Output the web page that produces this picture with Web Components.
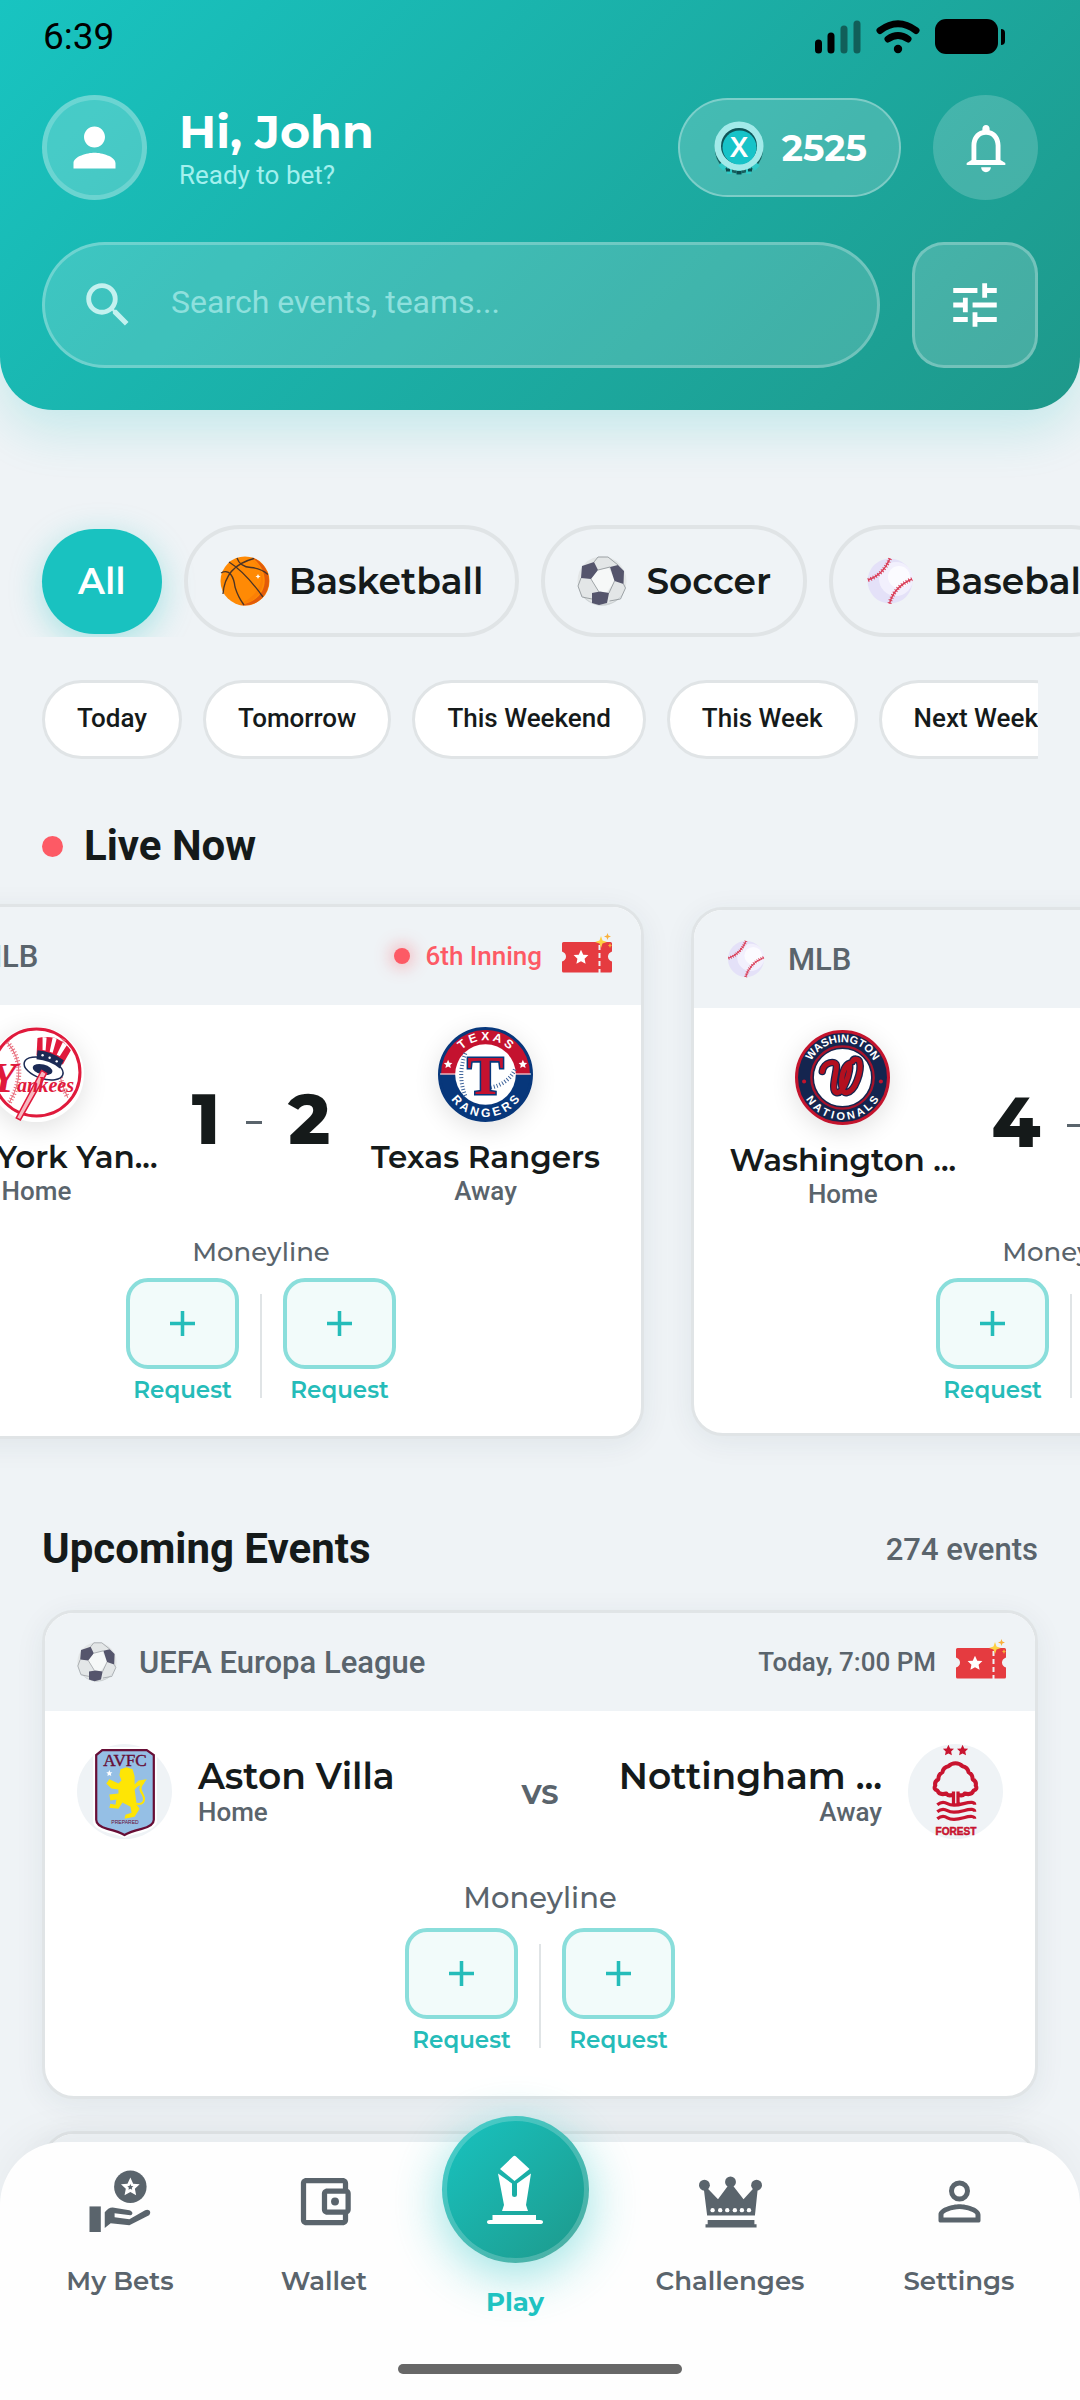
<!DOCTYPE html>
<html lang="en">
<head>
<meta charset="utf-8">
<meta name="viewport" content="width=device-width, initial-scale=1">
<title>Events</title>
<style>
  :root {
    --bg: #eff3f6;
    --ink: #151a1a;
    --muted: #5a646c;
    --line: #e0e4e6;
    --teal: #19c2c0;
    --live: #fd5a65;
    --display: Montserrat, Inter, "Noto Sans", sans-serif;
  }
  * { box-sizing: border-box; }
  body {
    margin: 0;
    background: var(--bg);
    color: var(--ink);
    font-family: Roboto, "Noto Sans", sans-serif;
  }
</style>
</head>
<body>
<bet-app></bet-app>

<script>
const STAR = 'M0-10 2.9-3.6 9.5-3.1 4.6 1.5 5.9 8.1 0 4.9-5.9 8.1-4.6 1.5-9.5-3.1-2.9-3.6z';

const ICONS = {
  person: '<svg viewBox="0 0 24 24"><path fill="currentColor" d="M12 12c2.21 0 4-1.79 4-4s-1.79-4-4-4-4 1.79-4 4 1.79 4 4 4zm0 2c-2.67 0-8 1.34-8 4v2h16v-2c0-2.66-5.33-4-8-4z"/></svg>',
  search: '<svg viewBox="0 0 24 24"><path fill="currentColor" d="M15.5 14h-.79l-.28-.27A6.471 6.471 0 0 0 16 9.500 6.500 6.500 0 1 0 9.500 16c1.610 0 3.090-.590 4.230-1.570l.270.280v.790l5 4.990L20.490 19l-4.990-5zm-6 0C7.010 14 5 11.990 5 9.500S7.010 5 9.500 5 14 7.010 14 9.500 11.990 14 9.500 14z"/></svg>',
  bell: '<svg viewBox="0 0 24 24"><path fill="currentColor" d="M12 22c1.1 0 2-.9 2-2h-4c0 1.1.9 2 2 2zm6-5v-6c0-3.070-1.630-5.640-4.500-6.320V4c0-.830-.670-1.500-1.500-1.500s-1.500.670-1.500 1.500v.680C7.640 5.360 6 7.920 6 11v6l-2 1.200V19h16v-.8L18 17zm-2 0H8v-6c0-2.480 1.510-4.500 4-4.500s4 2.020 4 4.500v6z"/></svg>',
  tune: '<svg viewBox="0 0 24 24"><path fill="currentColor" d="M3 17v2h6v-2H3zM3 5v2h10V5H3zm10 16v-2h8v-2h-8v-2h-2v6h2zM7 9v2H3v2h4v2h2V9H7zm14 4v-2H11v2h10zm-6-4h2V7h4V5h-4V3h-2v6z"/></svg>',
  plus: '<svg viewBox="0 0 24 24"><path stroke="currentColor" stroke-width="3.4" d="M12 0v24M0 12h24"/></svg>',
  wallet: '<svg viewBox="0 0 24 24"><path fill="currentColor" d="M21 7.280V5c0-1.100-.900-2-2-2H5c-1.110 0-2 .900-2 2v14c0 1.100.890 2 2 2h14c1.100 0 2-.900 2-2v-2.280c.590-.350 1-.980 1-1.720V9c0-.740-.410-1.370-1-1.720zM20 9v6h-7V9h7zM5 19V5h14v2h-6c-1.100 0-2 .900-2 2v6c0 1.100.900 2 2 2h6v2H5z"/><circle fill="currentColor" cx="16" cy="12" r="1.500"/></svg>',
  personOutline: '<svg viewBox="0 0 24 24"><path fill="currentColor" fill-rule="evenodd" d="M12 4a4 4 0 1 0 0 8 4 4 0 0 0 0-8zm0 1.900a2.100 2.100 0 1 1 0 4.200 2.100 2.100 0 0 1 0-4.200zM12 13c-2.670 0-8 1.340-8 4v2.200c0 .500.300.800.800.800h14.400c.500 0 .800-.300.800-.800V17c0-2.660-5.330-4-8-4zm0 1.900c2.970 0 6.100 1.460 6.100 2.100v1.100H5.900V17c0-.640 3.130-2.100 6.100-2.100z"/></svg>',
  bets: `<svg viewBox="0 0 64 64"><g fill="currentColor"><path d="M.5 37H12v26H.5z"/><circle cx="42" cy="17" r="16.5"/>
    <path fill-rule="evenodd" d="M16 43c2-3 5-5 8-5l17 3c4 1 4 5 1 5l-16-2v4l15 2 16-9c4-2 7 2 4 5L41 56l-19-2-6 5z"/></g>
    <path fill="#fff" transform="translate(42 17.500)" d="${STAR}"/><path fill="currentColor" transform="translate(42 17.500) scale(.32)" d="${STAR}"/></svg>`,
  crown: `<svg viewBox="0 0 58 58"><g transform="translate(0 6)" fill="currentColor"><circle cx="5" cy="8" r="5"/><circle cx="29" cy="5" r="5"/><circle cx="53" cy="8" r="5"/>
    <path d="M4.500 12 8 11l9.500 10L27 8h4l10 13 9-10 4 1-2.500 24h-44zM8 40h43v4h2v3H6v-3h2z"/>
    <g fill="#fff"><circle cx="12.500" cy="31" r="2"/><circle cx="19.500" cy="31" r="2"/><circle cx="26" cy="31" r="2"/><circle cx="33" cy="31" r="2"/><circle cx="39.500" cy="31" r="2"/><circle cx="46" cy="31" r="2"/></g></g></svg>`,
  bishop: '<svg viewBox="0 0 60 70"><path fill="currentColor" d="M28 1.500q1.500-1.500 3 0l13.500 12.500-15 12L15 14zM13 18.500l14 10V40q0 2 2.500 2t2.500-2V28.500l14-10L41 50l2 6H17l2-6zM7.500 60H51v5h4q3 0 3 2t-3 2H5q-3 0-3-2t3-2h2.500z"/></svg>',
  signal: '<svg viewBox="0 0 46 34"><path d="M3.500 23v7M16 16v14" stroke="#000" stroke-width="7" stroke-linecap="round"/><path d="M29 9v21M42 4v26" stroke="#115f59" stroke-width="7" stroke-linecap="round"/></svg>',
  wifi: '<svg viewBox="0 0 46 34"><g fill="none" stroke="#000" stroke-width="7" stroke-linecap="round"><path d="M5 10.500Q23-3 41 10.500M13 19q10-7 20 0"/></g><circle cx="23" cy="29" r="4.200"/></svg>',
  battery: '<svg viewBox="0 0 71 36"><rect x="0" y="0" width="63" height="35" rx="11"/><path d="M66 10q4 0 4 4v8q0 4-4 4z"/></svg>',
  coin: `<svg viewBox="0 0 50 54"><circle cx="25" cy="28.500" r="24" fill="#17605f"/><path d="M6 43l5 5M15.500 46v7M25 48v6M34.500 46v7M44 43l-5 5" stroke="#30c9c6" stroke-width="5"/>
    <path d="M12 47.500h4v3h-4zM22.500 50h5v3.500h-5zM34 47.500h4v3h-4z" fill="#0d4b4d"/>
    <circle cx="25" cy="25" r="24.500" fill="#a2eae9"/><circle cx="25" cy="25" r="18" fill="#0e5558"/><circle cx="25.500" cy="26.500" r="17" fill="#17c3c8"/>
    <text x="25" y="36" text-anchor="middle" font-family="Inter, sans-serif" font-size="27" font-weight="600" fill="#fff">X</text></svg>`,
  basketball: `<svg viewBox="0 0 50 50"><circle cx="25" cy="25" r="24.500" fill="#ff8a05"/><path fill="#e25b0a" d="M31 1.300A24.500 24.500 0 0 1 20 49C52 44 50 12 31 1.300z"/><path fill="#f87607" d="M27 1A24.500 24.500 0 0 1 18 48.500C46 38 48 12 27 1z" opacity=".5"/>
    <g fill="none" stroke="#4c3426" stroke-width="1.300"><path d="M9 6q16 10 34 35M3 38Q5 10 34 2.500M1 17c9-5 13 5 14 14q3 10 9 18M17 2q3 9 14 9.500 10 1 17 7"/></g><path fill="#fff" d="m38 18 .8 1.700 1.700.8-1.700.8-.8 1.700-.8-1.700-1.700-.8 1.700-.8z"/></svg>`,
  soccer: `<svg viewBox="0 0 50 50"><circle cx="25" cy="25" r="24.500" fill="#e3e6e7"/><path fill="#cdd2d4" d="M3 36a24.500 24.500 0 0 0 44 0 26 26 0 0 1-44 0z"/><path fill="#f6f8f8" d="m20 14 12-2 6 13-8 11H22l-8-13z"/>
    <path fill="#55556c" d="m5 10 12-4 4 8-7 9-10-1zM33 11l8-2 6 6-.500 13-9-3zM15 37l8-1.500 9 1.500-2 10-8 2-7-2z"/>
    <path fill="none" stroke="#8a9094" stroke-width=".8" d="m21 14 12-3M14 23l8 13M37.500 25 32 37M17 6l4-5h10l10 8M4 22l-3 8 4 11 10 2M46.500 28l2 4-5 11-11 2"/></svg>`,
  baseball: `<svg viewBox="0 0 50 50"><circle cx="25" cy="25" r="22.500" fill="#e4e1f8"/><circle cx="31" cy="23" r="17" fill="#f2f0fd"/><circle cx="34" cy="21" r="11" fill="#fbfbff"/>
    <g fill="none" stroke="#da3f59"><path stroke-width="1.400" d="M3 24Q18 19 25 2.500M24.500 47.500Q29 31 47 23"/><path stroke-width="4" stroke-dasharray="1 1.800" d="M3 24Q18 19 25 2.500M24.500 47.500Q29 31 47 23"/></g></svg>`,
  ticket: `<svg viewBox="0 0 50 42"><path fill="#e53b40" d="M1.500 9h47q1.500 0 1.500 1.500v8q-4 1.500-4 5t4 5V38q0 1.500-1.500 1.500h-47Q0 39.500 0 38v-9.500q4-1.500 4-5t-4-5v-8Q0 9 1.500 9z"/><path stroke="#eff3f6" stroke-width="2" stroke-dasharray="5 3" d="M37.500 12v28"/>
    <path fill="#fff" transform="translate(19 24.500) scale(.78)" d="${STAR}"/><path fill="#fdd043" d="m39 3 1.500 4.500L45 9l-4.500 1.500L39 15l-1.500-4.500L33 9l4.500-1.500z"/><path fill="#f9b03c" d="m45.500 0 .9 2.600L49 3.500l-2.600.9-.9 2.600-.9-2.600-2.600-.9 2.600-.9zM48 10l.7 1.800 1.300.7-1.300.7L48 15l-.7-1.800-1.300-.7 1.300-.7z"/></svg>`,
  yankees: `<svg viewBox="0 0 94 94"><circle cx="47" cy="45" r="43" fill="#fff" stroke="#e01a3c" stroke-width="3"/>
    <g fill="none" stroke="#e8707f"><path d="M18 15q22 26 2 60M74 12q-12 26 4 58"/><path stroke-width="5" stroke-dasharray="1 2" d="M18 15q22 26 2 60M74 12q-12 26 4 58"/></g>
    <ellipse cx="54" cy="41" rx="20" ry="10" transform="rotate(18 54 41)" fill="#fff" stroke="#1b2a55" stroke-width="1.500"/><ellipse cx="53" cy="42" rx="10" ry="5" transform="rotate(14 53 42)" fill="#1b2a55"/>
    <path fill="#e01a3c" d="M48 11q8-2 18 0 10 5 15 12l-8 14-26-9z"/><path fill="#fff" d="m53 10 4 .3-1 13-3-.5zM63 10.500l4 1-4 14-3-1zM73 15l4 3-7 11-3-1.500z"/><path fill="#1b2a55" d="M48 23q14 1 26 10l-4 8q-10-8-23-9z"/>
    <g fill="#fff"><circle cx="53" cy="28" r="1.200"/><circle cx="60" cy="30.500" r="1.200"/><circle cx="67" cy="34" r="1.200"/></g>
    <path fill="#f7b9c1" stroke="#e01a3c" stroke-width="1.500" d="m52 43 5 3-26 46-4-2z"/>
    <text x="2" y="64" font-family="'Liberation Serif', serif" font-style="italic" font-weight="700" fill="#e01a3c"><tspan font-size="42">Y</tspan><tspan font-size="20">ankees</tspan></text></svg>`,
  rangers: `<svg viewBox="0 0 94 94"><circle cx="47" cy="47" r="45.500" fill="#c4122f"/><path fill="#07377b" d="M1.500 47a45.500 45.500 0 0 0 91 0z"/><circle cx="47" cy="47" r="45.500" fill="none" stroke="#07377b" stroke-width="3"/><path stroke="#fff" stroke-width="1" d="M2 46.500h90"/>
    <circle cx="47" cy="47" r="30" fill="#fff"/><g fill="none" stroke="#40659c" stroke-width="4" stroke-dasharray="1 2"><path d="M27 26q-8 22 0 42M76 42q-6 14-24 18"/></g>
    <path id="top" fill="none" d="M13 47a34 34 0 0 1 68 0"/><path id="bot" fill="none" d="M5 47a42 42 0 0 0 84 0"/>
    <g font-family="'Liberation Sans', sans-serif" font-weight="700" font-size="12" fill="#fff" text-anchor="middle"><text><textPath href="#top" startOffset="50%">T E X A S</textPath></text><text><textPath href="#bot" startOffset="50%">R A N G E R S</textPath></text></g>
    <g transform="translate(10 37) scale(.45)" fill="#fff"><path d="${STAR}"/></g><g transform="translate(84 37) scale(.45)" fill="#fff"><path d="${STAR}"/></g>
    <text x="47" y="66" text-anchor="middle" font-family="'Liberation Serif', serif" font-weight="700" font-size="54" fill="#c4122f" stroke="#07377b" stroke-width="3" paint-order="stroke">T</text></svg>`,
  nationals: `<svg viewBox="0 0 94 94"><circle cx="47" cy="47" r="45.500" fill="#14254f" stroke="#c3142d" stroke-width="3"/><circle cx="47" cy="47" r="30" fill="#fff" stroke="#a8132b" stroke-width="4"/><circle cx="47" cy="47" r="29" fill="#fff" stroke="#14254f" stroke-width="1.500"/>
    <path id="top" fill="none" d="M12 47a35 35 0 0 1 70 0"/><path id="bot" fill="none" d="M5 47a42 42 0 0 0 84 0"/>
    <g font-family="'Liberation Sans', sans-serif" font-weight="700" font-size="11" fill="#fff" text-anchor="middle"><text><textPath href="#top" startOffset="50%">WASHINGTON</textPath></text><text><textPath href="#bot" startOffset="50%">N A T I O N A L S</textPath></text></g>
    <circle cx="9" cy="51" r="2" fill="#c3142d"/><circle cx="85" cy="51" r="2" fill="#c3142d"/>
    <g fill="none" stroke-linecap="round" stroke-linejoin="round"><path stroke="#14254f" stroke-width="7.500" d="M27 41c1-9 14-12 14-5 0 7-6 24 0 26 7 2 14-20 13-29-9 3-11 30-3 29 9-1 15-22 13-30-1-4-6-4-7-1"/><path stroke="#b3101f" stroke-width="5" d="M27 41c1-9 14-12 14-5 0 7-6 24 0 26 7 2 14-20 13-29-9 3-11 30-3 29 9-1 15-22 13-30-1-4-6-4-7-1"/></g></svg>`,
  villa: `<svg viewBox="0 0 94 94"><circle cx="47" cy="47" r="47" fill="#eff3f6"/><path fill="#fff" d="M23 3h48q6 5 8 9v66q-2 6-16 10-10 2-16 5-6-3-16-5-14-4-15-10V12q2-5 7-9z"/>
    <path fill="#95bfe5" stroke="#670e36" stroke-width="2.200" d="M25 6h44l7 5v64q0 6-12 9-12 3-17 6-5-3-17-6-11-3-11-9V11z"/>
    <text x="47.500" y="21.500" text-anchor="middle" font-family="'Liberation Serif', serif" font-size="17" fill="#670e36" stroke="#670e36" stroke-width=".4">AVFC</text><text x="47.500" y="79.500" text-anchor="middle" font-family="'Liberation Sans', sans-serif" font-size="5" fill="#670e36">PREPARED</text>
    <path fill="#fff" transform="translate(32 29) scale(.32)" d="${STAR}"/>
    <path fill="#fee505" d="m43 25 6-2 6 2 2 7v8l4-4 8-1-3 4-6 3-3 3 1 7 1 8 3 4-5 8-10 2 1-4 6-2-1-6-8-4-4 6-9-1 1-4 5 1 1-5-6 1-1-6 9-1v-4l-7-1-5-5 3-4 9 4 3-3-2-5z"/><path fill="none" stroke="#fee505" stroke-width="2" d="M55 58c11 4 13-2 10-8-4-6-2-9 1-12"/></svg>`,
  forest: `<svg viewBox="0 0 94 94"><circle cx="47" cy="47" r="47" fill="#eff3f6"/><g fill="#c8142f"><path transform="translate(40 6.500) scale(.58)" d="${STAR}"/><path transform="translate(54 6.500) scale(.58)" d="${STAR}"/></g>
    <g fill="none" stroke="#c8142f"><path stroke-width="4" stroke-linejoin="round" d="M45 50q-5 2-7-1-7 2-9-3-4-1-2-5-1-4 3-6 0-5 4-7 1-5 6-6 3-3 7-3t7 3q5 1 6 6 4 2 4 7 4 2 3 6 2 4-2 5-2 5-9 3-2 3-7 1"/><path stroke-width="3.200" d="M45 47v14M49.500 47v14M29 60q5-4 10-1t16 0 11 1M29 67q5-4 10-1t16 0 11 1M29 74q5-4 10-1t16 0 11 1"/></g>
    <text x="47.500" y="90" text-anchor="middle" font-family="'Liberation Sans Narrow', 'Liberation Sans', sans-serif" font-weight="700" font-size="10" fill="#c8142f" stroke="#c8142f" stroke-width=".5">FOREST</text></svg>`
};

// Attach an open shadow root and fill it
function render(el, html) {
  el.attachShadow({ mode: 'open' }).innerHTML = `<style>*{box-sizing:border-box}</style>${html}`;
}

// Icon, sized with --size (and --w for the ones that are not square)
class AppIcon extends HTMLElement {
  connectedCallback() {
    render(this, `
      <style>
        :host { display: block; flex: none; width: var(--w, var(--size, 24px)); height: var(--size, 24px); }
        svg { display: block; width: 100%; height: 100%; }
      </style>
      ${ICONS[this.getAttribute('name')]}
    `);
  }
}
customElements.define('app-icon', AppIcon);

class StatusBar extends HTMLElement {
  connectedCallback() {
    render(this, `
      <style>
        :host { display: flex; justify-content: space-between; align-items: center; height: 73px; padding: 0 74px 0 43px; color: #000; font-size: 37px; }
        div { display: flex; align-items: center; gap: 14px; }
        app-icon { --size: 34px; --w: 46px; }
        .battery { --size: 36px; --w: 71px; }
      </style>
      <time>6:39</time>
      <div><app-icon name="signal"></app-icon><app-icon name="wifi"></app-icon><app-icon class="battery" name="battery"></app-icon></div>
    `);
  }
}
customElements.define('status-bar', StatusBar);

class AppHeader extends HTMLElement {
  connectedCallback() {
    render(this, `
      <style>
        :host {
          display: block; flex: none; padding-bottom: 42px; color: #fff;
          border-radius: 0 0 53px 53px;
          background: linear-gradient(135deg, #18c4c1, #1e988a);
          box-shadow: 0 20px 50px #19c2c033;
        }
        .row { display: flex; align-items: center; padding: 0 42px; }
        .top { margin: 22px 0 42px; }
        button { font: inherit; color: inherit; padding: 0; border: 2px solid #ffffff4d; background: #ffffff2e; display: grid; place-items: center; flex: none; }
        .round { width: 105px; height: 105px; border-radius: 50%; --size: 63px; }
        .avatar { border: 5px solid #ffffff33; background: #ffffff33; }
        .bell { border: 0; margin-left: 32px; --size: 58px; }
        .hello { flex: 1; margin-left: 32px; padding-top: 6px; }
        h1 { margin: 0; font: 700 46px/48px var(--display); }
        p { margin: 0; font-size: 26px; line-height: 38px; color: #a3f0ee; }
        .coins { display: flex; gap: 18px; height: 99px; padding: 0 32px 0 34px; border-radius: 50px; font: 700 36px/40px var(--display); }
        .coins app-icon { --size: 54px; --w: 50px; }
        .search { flex: 1; display: flex; align-items: center; gap: 34px; height: 126px; padding: 0 40px 0 34px; border: 3px solid #ffffff40; border-radius: 63px; background: #ffffff29; }
        .search app-icon { --size: 58px; color: #c3f1ef; }
        input { flex: 1; min-width: 0; border: 0; padding: 0 0 6px; background: none; font: 400 32px/40px Roboto, sans-serif; color: #fff; outline: 0; }
        input::placeholder { color: #8ee0dd; }
        .filter { width: 126px; height: 126px; border: 3px solid #ffffff40; border-radius: 32px; margin-left: 32px; --size: 58px; }
      </style>
      <status-bar></status-bar>
      <div class="row top">
        <button class="round avatar" aria-label="Profile"><app-icon name="person"></app-icon></button>
        <div class="hello"><h1>Hi, John</h1><p>Ready to bet?</p></div>
        <button class="coins"><app-icon name="coin"></app-icon><span>2525</span></button>
        <button class="round bell" aria-label="Notifications"><app-icon name="bell"></app-icon></button>
      </div>
      <div class="row">
        <label class="search"><app-icon name="search"></app-icon><input type="search" aria-label="Search" placeholder="Search events, teams..."></label>
        <button class="filter" aria-label="Filters"><app-icon name="tune"></app-icon></button>
      </div>
    `);
  }
}
customElements.define('app-header', AppHeader);

class SportChip extends HTMLElement {
  connectedCallback() {
    const icon = this.getAttribute('icon');
    render(this, `
      <style>
        :host { display: block; flex: none; }
        button { display: flex; align-items: center; gap: 19px; height: 112px; padding: 0 32px; border: 4px solid var(--line); border-radius: 56px; background: none; color: var(--ink); font: 600 36px/44px var(--display); --size: 50px; white-space: nowrap; }
        :host([active]) button { height: 105px; padding: 0 36px; border: 0; background: var(--teal); color: #fff; box-shadow: 0 8px 32px #19c2c059; }
      </style>
      <button>${icon ? `<app-icon name="${icon}"></app-icon>` : ''}<slot></slot></button>
    `);
  }
}
customElements.define('sport-chip', SportChip);

class DateChip extends HTMLElement {
  connectedCallback() {
    render(this, `
      <style>
        :host { display: block; flex: none; }
        button { height: 79px; padding: 0 32px 4px; border: 3px solid var(--line); border-radius: 40px; background: #fff; color: var(--ink); font: 500 26px/32px Roboto, sans-serif; white-space: nowrap; }
      </style>
      <button><slot></slot></button>
    `);
  }
}
customElements.define('date-chip', DateChip);

// Moneyline block with its two request buttons
class MoneyLine extends HTMLElement {
  connectedCallback() {
    const req = '<div class="pick"><button aria-label="Request"><app-icon name="plus"></app-icon></button><span>Request</span></div>';
    render(this, `
      <style>
        :host { display: block; text-align: center; font: 600 23px/30px var(--display); }
        .title { font-size: var(--title, 26px); font-weight: 500; line-height: var(--title-line, 34px); color: var(--muted); margin-bottom: 9px; }
        .row { display: flex; justify-content: center; gap: 21px; }
        .pick { color: #25bcb9; display: flex; flex-direction: column; align-items: center; gap: 6px; }
        button { width: 113px; height: 91px; padding: 0; border: 4px solid #8adedb; border-radius: 22px; background: #f2fbfa; color: inherit; display: grid; place-items: center; --size: 25px; }
        i { width: 2px; margin: 16px 0 7px; background: var(--line); }
      </style>
      <div class="title">Moneyline</div>
      <div class="row">${req}<i></i>${req}</div>
    `);
  }
}
customElements.define('money-line', MoneyLine);

// Card frame: league on the left, "status" slot on the right, body below
class EventCard extends HTMLElement {
  connectedCallback() {
    render(this, `
      <style>
        :host { display: block; border: 3px solid var(--line); border-radius: 32px; background: #fff; overflow: hidden; box-shadow: 0 6px 30px #1a334d12; }
        header { display: flex; align-items: center; height: 98px; padding: 0 29px 0 32px; background: var(--bg); color: var(--muted); font-size: 31px; font-weight: 500; --size: 40px; }
        .league { flex: 1; margin-left: 22px; white-space: nowrap; }
        .status { display: flex; align-items: center; font-size: 26px; }
        .ticket { --size: 42px; --w: 50px; margin: 0 0 4px 20px; }
      </style>
      <header>
        <app-icon name="${this.getAttribute('sport')}"></app-icon>
        <span class="league">${this.getAttribute('league')}</span>
        <span class="status"><slot name="status"></slot></span>
        <app-icon class="ticket" name="ticket"></app-icon>
      </header>
      <slot></slot>
    `);
  }
}
customElements.define('event-card', EventCard);

class LiveBadge extends HTMLElement {
  connectedCallback() {
    render(this, `
      <style>
        :host { display: flex; align-items: center; gap: 16px; color: var(--live); font-size: 26px; }
        i { width: 16px; height: 16px; border-radius: 50%; background: currentColor; box-shadow: 0 0 16px 4px #fd5a6559; }
      </style>
      <i></i><slot></slot>
    `);
  }
}
customElements.define('live-badge', LiveBadge);

class LiveGame extends HTMLElement {
  connectedCallback() {
    const a = name => this.getAttribute(name);
    const team = (logo, name, role) => `<div class="team"><app-icon name="${logo}"></app-icon><b>${name}</b><span>${role}</span></div>`;
    render(this, `
      <style>
        :host { display: block; padding: 22px 32px var(--pad, 31px); }
        .row { display: grid; grid-template-columns: minmax(0, 1fr) auto minmax(0, 1fr); align-items: center; margin-bottom: var(--pad, 31px); }
        .team { display: flex; flex-direction: column; align-items: center; white-space: nowrap; }
        app-icon { --size: 95px; margin-bottom: 15px; border-radius: 50%; box-shadow: 0 6px 26px #0000001f; }
        b { font: 600 31px/41px var(--display); }
        span { font-size: 26px; line-height: 26px; font-weight: 500; color: var(--muted); }
        .score { display: flex; align-items: center; gap: 26px; padding: 6px 32px 0; font: 800 70px/80px var(--display); }
        .score i { width: 16px; height: 3px; background: var(--muted); margin-top: 8px; }
      </style>
      <div class="row">
        ${team(a('home-logo'), a('home'), 'Home')}
        <div class="score">${a('home-score')}<i></i>${a('away-score')}</div>
        ${team(a('away-logo'), a('away'), 'Away')}
      </div>
      <money-line></money-line>
    `);
  }
}
customElements.define('live-game', LiveGame);

class UpcomingGame extends HTMLElement {
  connectedCallback() {
    const a = name => this.getAttribute(name);
    render(this, `
      <style>
        :host { display: block; padding: 33px 32px 41px; }
        .row { display: grid; grid-template-columns: 1fr auto 1fr; align-items: center; margin-bottom: 38px; }
        .team { display: flex; align-items: center; gap: 26px; --size: 95px; white-space: nowrap; }
        .team div { padding-bottom: 4px; }
        .away { flex-direction: row-reverse; text-align: right; }
        b { display: block; font: 600 36px/44px var(--display); }
        span { display: block; font-size: 26px; line-height: 28px; font-weight: 500; color: var(--muted); }
        .vs { font: 700 27px/36px var(--display); color: var(--muted); padding-top: 6px; }
        money-line { --title: 29px; --title-line: 42px; }
      </style>
      <div class="row">
        <div class="team"><app-icon name="${a('home-logo')}"></app-icon><div><b>${a('home')}</b><span>Home</span></div></div>
        <div class="vs">VS</div>
        <div class="team away"><app-icon name="${a('away-logo')}"></app-icon><div><b>${a('away')}</b><span>Away</span></div></div>
      </div>
      <money-line></money-line>
    `);
  }
}
customElements.define('upcoming-game', UpcomingGame);

class NavItem extends HTMLElement {
  connectedCallback() {
    render(this, `
      <style>
        :host { display: block; }
        a { display: flex; flex-direction: column; align-items: center; padding-top: 28px; text-decoration: none; color: var(--muted); font: 600 26px/34px var(--display); --size: 63px; }
        .icon { display: grid; place-items: center; height: 63px; margin-bottom: 31px; }
        :host([active]) a { padding: 0; margin-top: -26px; color: #1fc3c1; font-weight: 700; --size: 70px; --w: 60px; }
        :host([active]) .icon {
          width: 147px; height: 147px; margin-bottom: 22px; border-radius: 50%; color: #fff;
          background: linear-gradient(135deg, #18c4c1, #1e988a);
          box-shadow: inset 0 0 0 5px #ffffff33, 0 12px 50px #19c2c073;
        }
      </style>
      <a href="#"><span class="icon"><app-icon name="${this.getAttribute('icon')}"></app-icon></span><slot></slot></a>
    `);
  }
}
customElements.define('nav-item', NavItem);

class BottomNav extends HTMLElement {
  connectedCallback() {
    render(this, `
      <style>
        :host { position: absolute; left: 0; right: 0; bottom: 0; height: 258px; display: flex; flex-direction: column; border-radius: 63px 63px 0 0; background: #fefefe; box-shadow: 0 -10px 40px #0000000a; }
        nav { flex: 1; display: grid; grid-template-columns: 240fr 168fr 214fr 216fr 242fr; }
        .bar { width: 284px; height: 10px; margin: 0 auto 26px; border-radius: 5px; background: #676767; }
      </style>
      <nav>
        <nav-item icon="bets">My Bets</nav-item>
        <nav-item icon="wallet">Wallet</nav-item>
        <nav-item icon="bishop" active>Play</nav-item>
        <nav-item icon="crown">Challenges</nav-item>
        <nav-item icon="personOutline">Settings</nav-item>
      </nav>
      <div class="bar"></div>
    `);
  }
}
customElements.define('bottom-nav', BottomNav);

class BetApp extends HTMLElement {
  connectedCallback() {
    render(this, `
      <style>
        :host { display: flex; flex-direction: column; position: relative; height: 100vh; overflow: hidden; }
        main { flex: 1; min-height: 0; overflow: hidden; }
        app-header { z-index: 1; }
        .sports { display: flex; align-items: center; gap: 22px; padding: 115px 0 0 42px; overflow: hidden; }
        .dates { display: flex; gap: 21px; margin: 43px 42px 0; overflow: hidden; }
        h2 { margin: 0; font-size: 42px; line-height: 50px; font-weight: 700; }
        .head { display: flex; align-items: center; gap: 21px; margin: 62px 42px 33px; }
        .head i { width: 21px; height: 21px; border-radius: 50%; background: var(--live); }
        /* one slide is three quarters of the screen */
        .slides { display: flex; margin-left: -144px; }
        .slides event-card { flex: none; width: calc(75vw - 44px); margin: 0 22px; }
        .slides .next { width: calc(75vw - 50px); margin: 3px 25px; --pad: 28px; }
        .upcoming { justify-content: space-between; margin: 85px 42px 36px; }
        .upcoming span { font-size: 31px; font-weight: 500; color: var(--muted); }
        .list { display: grid; gap: 32px; margin: 0 42px; }
      </style>
      <app-header></app-header>
      <main>
        <div class="sports">
          <sport-chip active>All</sport-chip>
          <sport-chip icon="basketball">Basketball</sport-chip>
          <sport-chip icon="soccer">Soccer</sport-chip>
          <sport-chip icon="baseball">Baseball</sport-chip>
        </div>
        <div class="dates">
          <date-chip>Today</date-chip>
          <date-chip>Tomorrow</date-chip>
          <date-chip>This Weekend</date-chip>
          <date-chip>This Week</date-chip>
          <date-chip>Next Week</date-chip>
        </div>
        <div class="head"><i></i><h2>Live Now</h2></div>
        <div class="slides">
          <event-card sport="baseball" league="MLB">
            <live-badge slot="status">6th Inning</live-badge>
            <live-game home-logo="yankees" home="New York Yan..." home-score="1" away-logo="rangers" away="Texas Rangers" away-score="2"></live-game>
          </event-card>
          <event-card class="next" sport="baseball" league="MLB">
            <live-game home-logo="nationals" home="Washington ..." home-score="4" away-logo="baseball" away="" away-score="2"></live-game>
          </event-card>
        </div>
        <div class="head upcoming"><h2>Upcoming Events</h2><span>274 events</span></div>
        <div class="list">
          <event-card sport="soccer" league="UEFA Europa League">
            <span slot="status">Today, 7:00 PM</span>
            <upcoming-game home-logo="villa" home="Aston Villa" away-logo="forest" away="Nottingham ..."></upcoming-game>
          </event-card>
          <event-card sport="soccer" league=""></event-card>
        </div>
      </main>
      <bottom-nav></bottom-nav>
    `);
  }
}
customElements.define('bet-app', BetApp);
</script>
</body>
</html>
